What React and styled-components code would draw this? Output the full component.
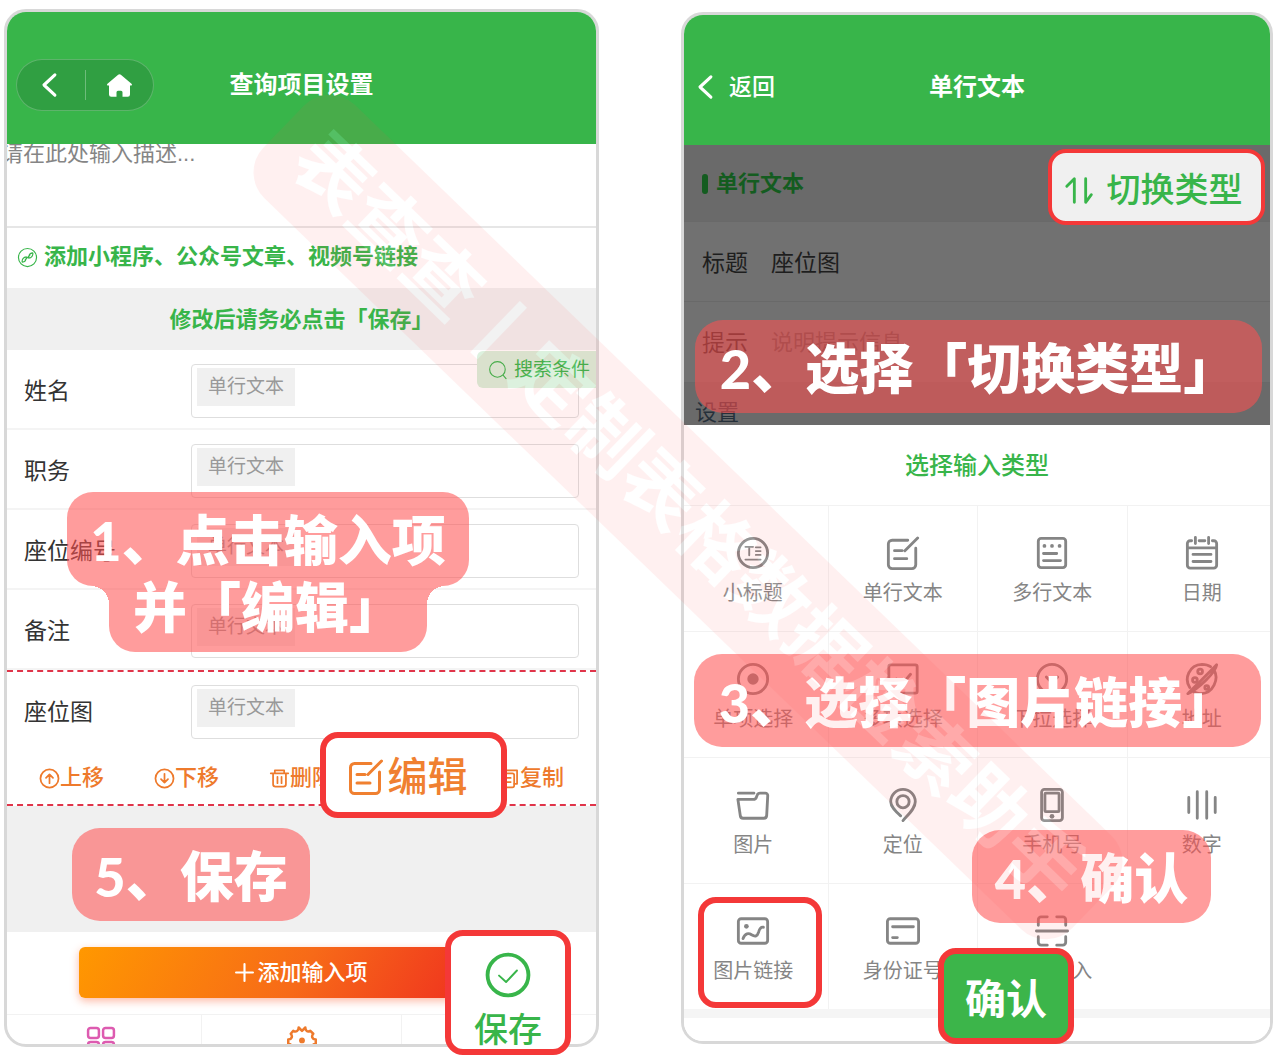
import React from "react";
import styled, { createGlobalStyle, css } from "styled-components";

const GREEN = "#38b54a";
const RED = "#f43838";
const PINK = "rgba(255, 81, 81, 0.57)";

const GlobalStyle = createGlobalStyle`
  *, *::before, *::after { box-sizing: border-box; }
  body {
    margin: 0;
    background: #fff;
    color: #333;
    font-family: "Liberation Sans", "Noto Sans CJK SC", sans-serif;
  }
  h1, h2, p { margin: 0; padding: 0; font-weight: 400; }
  button {
    padding: 0;
    border: 0;
    background: none;
    color: inherit;
    font: inherit;
    cursor: pointer;
  }
`;

/* ---------- page and phone frames ---------- */

const Page = styled.main`
  position: relative;
  display: grid;
  grid-template-columns: 595fr 592fr;
  gap: 82px;
  align-items: start;
  padding: 9px 7px 8px 4px;
  overflow: hidden;
`;

const Stage = styled.section`
  position: relative;
  margin-top: ${(p) => p.$drop || 0}px;
`;

const Phone = styled.div`
  overflow: hidden;
  border: 3px solid #d8d8d8;
  border-radius: 22px;
  background: #fff;
`;

const Header = styled.header`
  display: grid;
  grid-template-columns: 1fr auto 1fr;
  align-items: center;
  height: ${(p) => p.$height}px;
  padding: 14px 9px 0;
  background: ${GREEN};
  color: #fff;
`;

const HeaderTitle = styled.h1`
  font-size: 24px;
  line-height: 36px;
  font-weight: 700;
`;

const Capsule = styled.nav`
  display: flex;
  align-items: center;
  justify-self: start;
  width: 138px;
  height: 52px;
  border: 1px solid rgba(255, 255, 255, 0.22);
  border-radius: 26px;
  background: #309f42;
`;

const CapsuleButton = styled.button`
  display: flex;
  flex: 1;
  align-items: center;
  justify-content: center;
  height: 30px;
  & + & { border-left: 1px solid rgba(255, 255, 255, 0.3); }
`;

const BackButton = styled.button`
  display: flex;
  align-items: center;
  justify-self: start;
  gap: 8px;
  font-size: 23px;
  line-height: 36px;
  font-weight: 500;
`;

/* ---------- settings form ---------- */

const Description = styled.textarea`
  display: block;
  width: calc(100% + 6px);
  height: 84px;
  margin-left: -6px;
  padding: 0;
  border: 0;
  border-bottom: 2px solid #e6e6e6;
  resize: none;
  outline: none;
  font: inherit;
  font-size: 22px;
  line-height: 20px;
  overflow: hidden;
  &::placeholder { color: #858585; }
`;

const LinkRow = styled.a`
  display: flex;
  align-items: center;
  gap: 6px;
  height: 60px;
  padding: 0 0 2px 10px;
  color: ${GREEN};
  font-size: 22px;
  line-height: 30px;
  font-weight: 700;
  text-decoration: none;
  white-space: nowrap;
`;

const Notice = styled.p`
  height: 62px;
  background: #f0f0f0;
  color: ${GREEN};
  font-size: 22px;
  line-height: 64px;
  font-weight: 700;
  text-align: center;
`;

const Row = styled.div`
  position: relative;
  display: grid;
  grid-template-columns: 167px 1fr;
  align-items: center;
  height: 80px;
  padding: ${(p) => (p.$plain ? "0 17px" : "3px 17px 0")};
  border-bottom: ${(p) => (p.$plain ? "0" : "2px solid #f4f4f4")};
`;

const RowLabel = styled.label`
  font-size: 23px;
  line-height: 34px;
`;

const FieldBox = styled.div`
  display: flex;
  align-items: flex-start;
  height: 54px;
  padding: 3px 5px;
  border: 1px solid #dedede;
  border-radius: 4px;
`;

const TypeTag = styled.span`
  flex: none;
  padding: 0 11px;
  background: #f0f0f0;
  color: #999;
  font-size: 19px;
  line-height: 38px;
`;

const FieldInput = styled.input`
  flex: 1;
  min-width: 0;
  height: 46px;
  border: 0;
  outline: none;
  background: transparent;
  font: inherit;
  font-size: 19px;
`;

const SearchBadge = styled.button`
  position: absolute;
  top: 1px;
  right: 0;
  display: flex;
  align-items: center;
  gap: 6px;
  height: 37px;
  padding: 0 6px 0 11px;
  border-radius: 6px 0 0 6px;
  background: #d7efd9;
  color: ${GREEN};
  font-size: 19px;
  line-height: 30px;
`;

const ActiveGroup = styled.div`
  border: dashed #e0354a;
  border-width: 2px 0;
`;

const Actions = styled.div`
  display: flex;
  height: 52px;
  padding: 0 7px;
`;

const Action = styled.button`
  display: flex;
  flex: 1;
  align-items: center;
  justify-content: center;
  color: #ee7a2c;
  font-size: 22px;
  line-height: 30px;
  font-weight: 500;
  white-space: nowrap;
`;

const GreySpace = styled.div`
  height: ${(p) => p.$height}px;
  background: ${(p) => p.$tone};
`;

const Footer = styled.div`
  display: flex;
  align-items: flex-start;
  height: 82px;
  padding: 15px 72px 0;
`;

const AddButton = styled.button`
  display: flex;
  flex: 1;
  align-items: center;
  justify-content: center;
  gap: 3px;
  height: 51px;
  border-radius: 6px;
  background: linear-gradient(120deg, #ff9800, #f76a18 50%, #f0371e 85%);
  box-shadow: 0 3px 9px rgba(250, 80, 30, 0.4);
  color: #fff;
  font-size: 22px;
  line-height: 30px;
  font-weight: 500;
`;

const Tabs = styled.nav`
  display: flex;
  height: 30px;
  margin: 0 -6px;
  border-top: 1px solid #f2f2f2;
  overflow: hidden;
`;

const Tab = styled.button`
  display: flex;
  flex: 1;
  align-items: flex-start;
  justify-content: center;
  padding-top: 10px;
  color: ${(p) => p.$color};
  & + & { border-left: 1px solid #f2f2f2; }
`;

/* ---------- dimmed page and type sheet ---------- */

const DimRow = styled.div`
  display: flex;
  align-items: center;
  gap: ${(p) => p.$gap || 0}px;
  height: ${(p) => p.$height}px;
  padding: 2px 18px 0;
  border-bottom: 1px solid #696969;
  background: ${(p) => (p.$deep ? "#6a6a6a" : "#717171")};
  color: #1e1e1e;
  font-size: 23px;
  line-height: 34px;
`;

const DimHeading = styled.h2`
  display: flex;
  align-items: center;
  gap: 8px;
  color: #145c20;
  font-size: 22px;
  font-weight: 700;
  &::before {
    content: "";
    width: 6px;
    height: 20px;
    border-radius: 3px;
    background: currentColor;
  }
`;

const DimHint = styled.span`
  color: #484848;
  font-size: 22px;
`;

const DimSection = styled.div`
  display: flex;
  align-items: flex-end;
  height: 42px;
  padding: 0 11px;
  background: #6a6a6a;
  color: #26303a;
  font-size: 22px;
  line-height: 24px;
`;

const SheetTitle = styled.h2`
  height: 80px;
  color: ${GREEN};
  font-size: 24px;
  line-height: 82px;
  font-weight: 500;
  text-align: center;
`;

const TypeGrid = styled.div`
  display: grid;
  grid-template-columns: repeat(4, 1fr);
  margin: 0 -6px;
`;

const TypeCell = styled.button`
  display: flex;
  flex-direction: column;
  align-items: center;
  justify-content: center;
  gap: 8px;
  height: 126px;
  padding-top: 6px;
  border-top: 1px solid #f2f2f2;
  color: #858585;
  font-size: 20px;
  line-height: 30px;
  & + & { border-left: 1px solid #f2f2f2; }
`;

/* ---------- annotations laid over the phones ---------- */

const bubble = css`
  color: #fff;
  font-family: Lato, "Noto Sans CJK SC", sans-serif;
  font-size: 54px;
  line-height: 66px;
  font-weight: 900;
  text-align: center;
  white-space: nowrap;
`;

const Callout = styled.p`
  ${bubble}
  position: absolute;
  top: ${(p) => p.$top}px;
  left: ${(p) => p.$left};
  right: ${(p) => p.$right};
  width: ${(p) => p.$width};
  padding: 16px 0 11px;
  border-radius: 28px;
  background: ${PINK};
`;

const StepOne = styled.div`
  position: absolute;
  top: 483px;
  left: 63px;
  display: flex;
  flex-direction: column;
  align-items: center;
`;

const StepOneTop = styled.p`
  ${bubble}
  width: 402px;
  padding: 16px 0 12px;
  border-radius: 26px;
  background: ${PINK};
`;

const StepOneBottom = styled.p`
  ${bubble}
  position: relative;
  width: 318px;
  height: 66px;
  border-radius: 0 0 26px 26px;
  background: ${PINK};
  line-height: 44px;
  &::before,
  &::after {
    content: "";
    position: absolute;
    top: 0;
    width: 18px;
    height: 18px;
  }
  &::before {
    right: 100%;
    background: radial-gradient(circle at 0 100%, transparent 18px, ${PINK} 18px);
  }
  &::after {
    left: 100%;
    background: radial-gradient(circle at 100% 100%, transparent 18px, ${PINK} 18px);
  }
`;

const Popout = styled.button`
  position: absolute;
  top: ${(p) => p.$top}px;
  left: ${(p) => p.$left};
  right: ${(p) => p.$right};
  display: flex;
  flex-direction: ${(p) => (p.$stack ? "column" : "row")};
  align-items: center;
  justify-content: center;
  gap: ${(p) => p.$gap || 0}px;
  width: ${(p) => p.$width}px;
  height: ${(p) => p.$height}px;
  padding: ${(p) => p.$pad};
  border: ${(p) => p.$line || 6}px solid ${RED};
  border-radius: 18px;
  background: ${(p) => p.$fill || "#fff"};
  color: ${(p) => p.$color};
  font-size: ${(p) => p.$size}px;
  line-height: 48px;
  font-weight: ${(p) => p.$weight || 500};
  white-space: nowrap;
`;

const Ring = styled.div`
  position: absolute;
  top: 885px;
  left: 17px;
  width: 124px;
  height: 111px;
  border: 6px solid ${RED};
  border-radius: 18px;
  pointer-events: none;
`;

const Watermark = styled.div`
  position: absolute;
  top: 517px;
  left: 688px;
  padding: 10px 30px;
  border-radius: 36px;
  background: ${PINK};
  color: #fff;
  font-size: 76px;
  line-height: 110px;
  font-weight: 700;
  white-space: nowrap;
  opacity: 0.14;
  transform: translate(-50%, -50%) rotate(44deg);
  pointer-events: none;
`;

/* ---------- icons ---------- */

const Svg = styled.svg`
  flex: none;
  display: block;
  fill: none;
  stroke: currentColor;
  stroke-linecap: round;
  stroke-linejoin: round;
`;

const dot = { fill: "currentColor", stroke: "none" };

const glyphs = {
  back: <path d="M23 5 9 18l14 13" />,
  home: (
    <path
      {...dot}
      d="M18 3c.7 0 1.300.3 1.800.7L34 15.500c1.300 1.200.6 2.500-1 2.500h-1v12a3 3 0 0 1-3 3h-7v-6a2 2 0 0 0-2-2h-4a2 2 0 0 0-2 2v6H7a3 3 0 0 1-3-3V18H3c-1.600 0-2.300-1.300-1-2.500L16.200 3.700c.5-.4 1.100-.7 1.800-.7z"
    />
  ),
  link: (
    <>
      <circle cx="18" cy="18" r="15.500" />
      <path d="M9 26c-1-4 2-9 7-9 0 5-2 8.500-7 9zM27 10c1 4-2 9-7 9 0-5 2-8.500 7-9zM14 22l8-8" />
    </>
  ),
  search: (
    <>
      <circle cx="17" cy="17" r="14" />
      <path d="m27.500 27.500 5 6" />
    </>
  ),
  up: (
    <>
      <circle cx="18" cy="18" r="15.500" />
      <path d="M18 26V11m-6 6 6-6 6 6" />
    </>
  ),
  down: (
    <>
      <circle cx="18" cy="18" r="15.500" />
      <path d="M18 10v15m-6-6 6 6 6-6" />
    </>
  ),
  trash: <path d="M3 9h30M10 9V4h16v5M7 9v19a4 4 0 0 0 4 4h14a4 4 0 0 0 4-4V9M14.500 15v11M21.500 15v11" />,
  edit: (
    <>
      <path d="M23 4.500H6.500a4 4 0 0 0-4 4v22a4 4 0 0 0 4 4h21a4 4 0 0 0 4-4V13" />
      <path d="M33.500 2 20 15.500M9 15.500h8M9 24h13" />
    </>
  ),
  copy: (
    <>
      <path d="M10 9V4h21v23h-5" />
      <rect x="4" y="9" width="22" height="24" rx="3" />
      <path d="M10 17h10M10 24h10" />
    </>
  ),
  plus: <path d="M18 2v32M2 18h32" />,
  apps: (
    <>
      <rect x="2.500" y="3.500" width="13" height="12" rx="3" />
      <rect x="20.500" y="3.500" width="13" height="12" rx="3" />
      <rect x="2.500" y="20.500" width="13" height="12" rx="3" />
      <rect x="20.500" y="20.500" width="13" height="12" rx="3" />
    </>
  ),
  gear: (
    <>
      <path d="M14 3c0 4-3 6-6.500 4L4.500 10.500c2.500 3 1.500 6.500-3 7v5c4.500.5 5.500 4 3 7l3.500 3.500c3.500-2 6 0 6 3h8c0-3 3-5 6-3l3.500-3.500c-2.500-3-1.500-6.500 3-7v-5c-4.500-.5-5.500-4-3-7L28 7c-3.500 2-6 0-6-4l-4 4z" />
      <circle cx="18" cy="18.500" r="3.500" {...dot} />
    </>
  ),
  check: (
    <>
      <circle cx="18" cy="18" r="16" />
      <path strokeWidth="1.500" d="m11 18.500 5.500 5L25 14.500" />
    </>
  ),
  swap: <path d="M4 14 12 6v25M24 6v25l6-8" />,
  heading: (
    <>
      <circle cx="18" cy="18" r="15.500" />
      <path d="M10 11.500h8M14 11.500v9M21 12h5M21 16h5M21 20h5M10 25h16" strokeWidth="2" />
    </>
  ),
  multiline: (
    <>
      <rect x="3.500" y="2.500" width="29" height="31" rx="3" />
      <path d="M9 18.500h14M9 26h18" />
      <circle cx="10" cy="10.500" r="2" {...dot} />
      <circle cx="18" cy="10.500" r="2" {...dot} />
      <circle cx="26" cy="10.500" r="2" {...dot} />
    </>
  ),
  calendar: (
    <path d="M7 5H5.500a3 3 0 0 0-3 3v23a3 3 0 0 0 3 3h25a3 3 0 0 0 3-3V8a3 3 0 0 0-3-3H29M15 5h6M11 1.500V8M25 1.500V8M2.500 12.500h31M8.500 19.500h19M8.500 27h19" />
  ),
  radio: (
    <>
      <circle cx="18" cy="18" r="15.500" />
      <circle cx="18" cy="18" r="6" {...dot} />
    </>
  ),
  checkbox: (
    <>
      <rect x="3" y="3" width="30" height="30" rx="2" />
      <path d="m11 18 6 5.500L26 13" />
    </>
  ),
  select: (
    <>
      <circle cx="18" cy="18" r="15.500" />
      <path d="m12 16 6 6 6-6" />
    </>
  ),
  address: (
    <>
      <path d="M31 9c5 9-1 24-14 24.500-4 0-7-1-9-3M5 27C-1 18 4 3 18 2.500c4 0 7 1 9 2.500M3 33.500C9 27 24 13 33.500 3c-1 8-19 25-30.500 30.500z" />
      <circle cx="16" cy="10" r="2.500" />
      <circle cx="10.500" cy="19" r="2.500" />
      <circle cx="23" cy="27" r="2" />
    </>
  ),
  folder: (
    <path d="M2.500 5.500H19M2 12h16.500c1.500 0 2.500-.6 3-2l1-2.500c.5-1.400 1.500-2 3-2H31c1.700 0 2.700 1 2.600 2.700L32.500 29c-.1 2-1.200 3-3 3h-22c-1.800 0-2.900-1-3-3z" />
  ),
  pin: (
    <>
      <path d="M15.500 29.500C10.500 25 5 20 5 14.500a13 13 0 0 1 26 0c0 7-7 13-13 20" />
      <circle cx="18" cy="14.500" r="6.500" />
    </>
  ),
  phone: (
    <>
      <rect x="7" y="1.500" width="22" height="33" rx="3" />
      <rect x="10.500" y="5.500" width="15" height="19.500" rx="1" />
      <circle cx="18" cy="30" r="2.500" {...dot} />
    </>
  ),
  bars: <path d="M4 10v16M13 4v28M23 4v28M32 10v16" />,
  picture: (
    <>
      <rect x="2.500" y="5" width="31" height="26" rx="3" />
      <circle cx="11" cy="13" r="2.500" {...dot} />
      <path d="M7.500 26c2-6 6-6 9-4 4 2.500 6 1.500 7.500-3 1-3.500 2-5.500 5-5" />
    </>
  ),
  card: (
    <>
      <rect x="1.500" y="5" width="33" height="26" rx="3" />
      <path d="M7 13.500h22M7 25h5" />
    </>
  ),
  scan: (
    <path d="M3.500 12V6a3 3 0 0 1 3-3H13M23 3h6.500a3 3 0 0 1 3 3v6M32.500 24v6a3 3 0 0 1-3 3H23M13 33H6.500a3 3 0 0 1-3-3v-6M1.500 18h33" />
  ),
};

function Icon({ name, size, weight = 3 }) {
  return (
    <Svg viewBox="0 0 36 36" width={size} height={size} strokeWidth={weight} aria-hidden="true">
      {glyphs[name]}
    </Svg>
  );
}

/* ---------- content ---------- */

const fields = [
  { id: "name", label: "姓名", searchable: true },
  { id: "post", label: "职务" },
  { id: "seat-no", label: "座位编号" },
  { id: "remark", label: "备注" },
];

const actions = [
  ["up", "上移"],
  ["down", "下移"],
  ["trash", "删除"],
  ["edit", "编辑"],
  ["copy", "复制"],
];

const types = [
  ["heading", "小标题"],
  ["edit", "单行文本"],
  ["multiline", "多行文本"],
  ["calendar", "日期"],
  ["radio", "单项选择"],
  ["checkbox", "多项选择"],
  ["select", "下拉选择"],
  ["address", "地址"],
  ["folder", "图片"],
  ["pin", "定位"],
  ["phone", "手机号"],
  ["bars", "数字"],
  ["picture", "图片链接"],
  ["card", "身份证号"],
  ["scan", "扫码录入"],
];

function Field({ id, label, searchable, plain }) {
  return (
    <Row $plain={plain}>
      <RowLabel htmlFor={id}>{label}</RowLabel>
      <FieldBox>
        <TypeTag>单行文本</TypeTag>
        <FieldInput id={id} type="text" />
      </FieldBox>
      {searchable && (
        <SearchBadge type="button">
          <Icon name="search" size={20} weight={2} />
          搜索条件
        </SearchBadge>
      )}
    </Row>
  );
}

function SettingsPhone() {
  return (
    <Stage>
      <Phone>
        <Header $height={132}>
          <Capsule>
            <CapsuleButton type="button" aria-label="返回">
              <Icon name="back" size={28} weight={4} />
            </CapsuleButton>
            <CapsuleButton type="button" aria-label="首页">
              <Icon name="home" size={27} />
            </CapsuleButton>
          </Capsule>
          <HeaderTitle>查询项目设置</HeaderTitle>
        </Header>
        <Description aria-label="描述" placeholder="请在此处输入描述..." />
        <LinkRow href="#links">
          <Icon name="link" size={21} weight={2} />
          添加小程序、公众号文章、视频号链接
        </LinkRow>
        <Notice>修改后请务必点击「保存」</Notice>
        {fields.map((field) => (
          <Field key={field.id} {...field} />
        ))}
        <ActiveGroup>
          <Field id="seat-map" label="座位图" plain />
          <Actions>
            {actions.map(([icon, label]) => (
              <Action key={label} type="button">
                <Icon name={icon} size={21} />
                {label}
              </Action>
            ))}
          </Actions>
        </ActiveGroup>
        <GreySpace $height={126} $tone="#f0f0f0" />
        <Footer>
          <AddButton type="button">
            <Icon name="plus" size={19} weight={4} />
            添加输入项
          </AddButton>
        </Footer>
        <Tabs>
          <Tab type="button" $color="#dd5bb0" aria-label="应用">
            <Icon name="apps" size={30} />
          </Tab>
          <Tab type="button" $color="#ee7a2c" aria-label="设置">
            <Icon name="gear" size={30} />
          </Tab>
          <Tab type="button" $color={GREEN} aria-label="完成" />
        </Tabs>
      </Phone>
      <StepOne>
        <StepOneTop>1、点击输入项</StepOneTop>
        <StepOneBottom>并「编辑」</StepOneBottom>
      </StepOne>
      <Callout $top={819} $left="68px" $width="238px">5、保存</Callout>
      <Popout type="button" $top={723} $right="92px" $width={187} $height={86} $pad="4px 12px 0 0" $gap={4} $size={40} $color="#f08030">
        <Icon name="edit" size={36} />
        编辑
      </Popout>
      <Popout type="button" $top={921} $right="28px" $width={126} $height={125} $pad="20px 0 0" $gap={8} $size={34} $color={GREEN} $stack>
        <Icon name="check" size={46} />
        保存
      </Popout>
    </Stage>
  );
}

function TypePhone() {
  return (
    <Stage $drop={3}>
      <Phone>
        <Header $height={130}>
          <BackButton type="button">
            <Icon name="back" size={28} weight={4} />
            返回
          </BackButton>
          <HeaderTitle>单行文本</HeaderTitle>
        </Header>
        <DimRow $height={77} $deep>
          <DimHeading>单行文本</DimHeading>
        </DimRow>
        <DimRow $height={80} $gap={23}>
          <span>标题</span>
          <span>座位图</span>
        </DimRow>
        <DimRow $height={81} $gap={23}>
          <span>提示</span>
          <DimHint>说明提示信息</DimHint>
        </DimRow>
        <DimSection>设置</DimSection>
        <SheetTitle>选择输入类型</SheetTitle>
        <TypeGrid>
          {types.map(([icon, label]) => (
            <TypeCell key={label} type="button">
              <Icon name={icon} size={34} />
              {label}
            </TypeCell>
          ))}
        </TypeGrid>
        <GreySpace $height={9} $tone="#f5f5f5" />
        <GreySpace $height={23} $tone="#fff" />
      </Phone>
      <Popout type="button" $top={137} $right="8px" $width={217} $height={76} $line={4} $pad="6px 8px 0 0" $gap={10} $size={34} $fill="#f0f0f0" $color={GREEN}>
        <Icon name="swap" size={34} />
        切换类型
      </Popout>
      <Ring />
      <Callout $top={308} $left="14px" $right="11px">2、选择「切换类型」</Callout>
      <Callout $top={642} $left="13px" $right="12px">3、选择「图片链接」</Callout>
      <Callout $top={818} $right="62px" $width="239px">4、确认</Callout>
      <Popout type="button" $top={936} $right="199px" $width={136} $height={96} $pad="8px 0 0" $size={41} $fill="#3cb54a" $color="#fff" $weight={700}>
        确认
      </Popout>
    </Stage>
  );
}

export default function App() {
  return (
    <>
      <GlobalStyle />
      <Page>
        <SettingsPhone />
        <TypePhone />
        <Watermark>表查查丨定制表格数据检索助手</Watermark>
      </Page>
    </>
  );
}
